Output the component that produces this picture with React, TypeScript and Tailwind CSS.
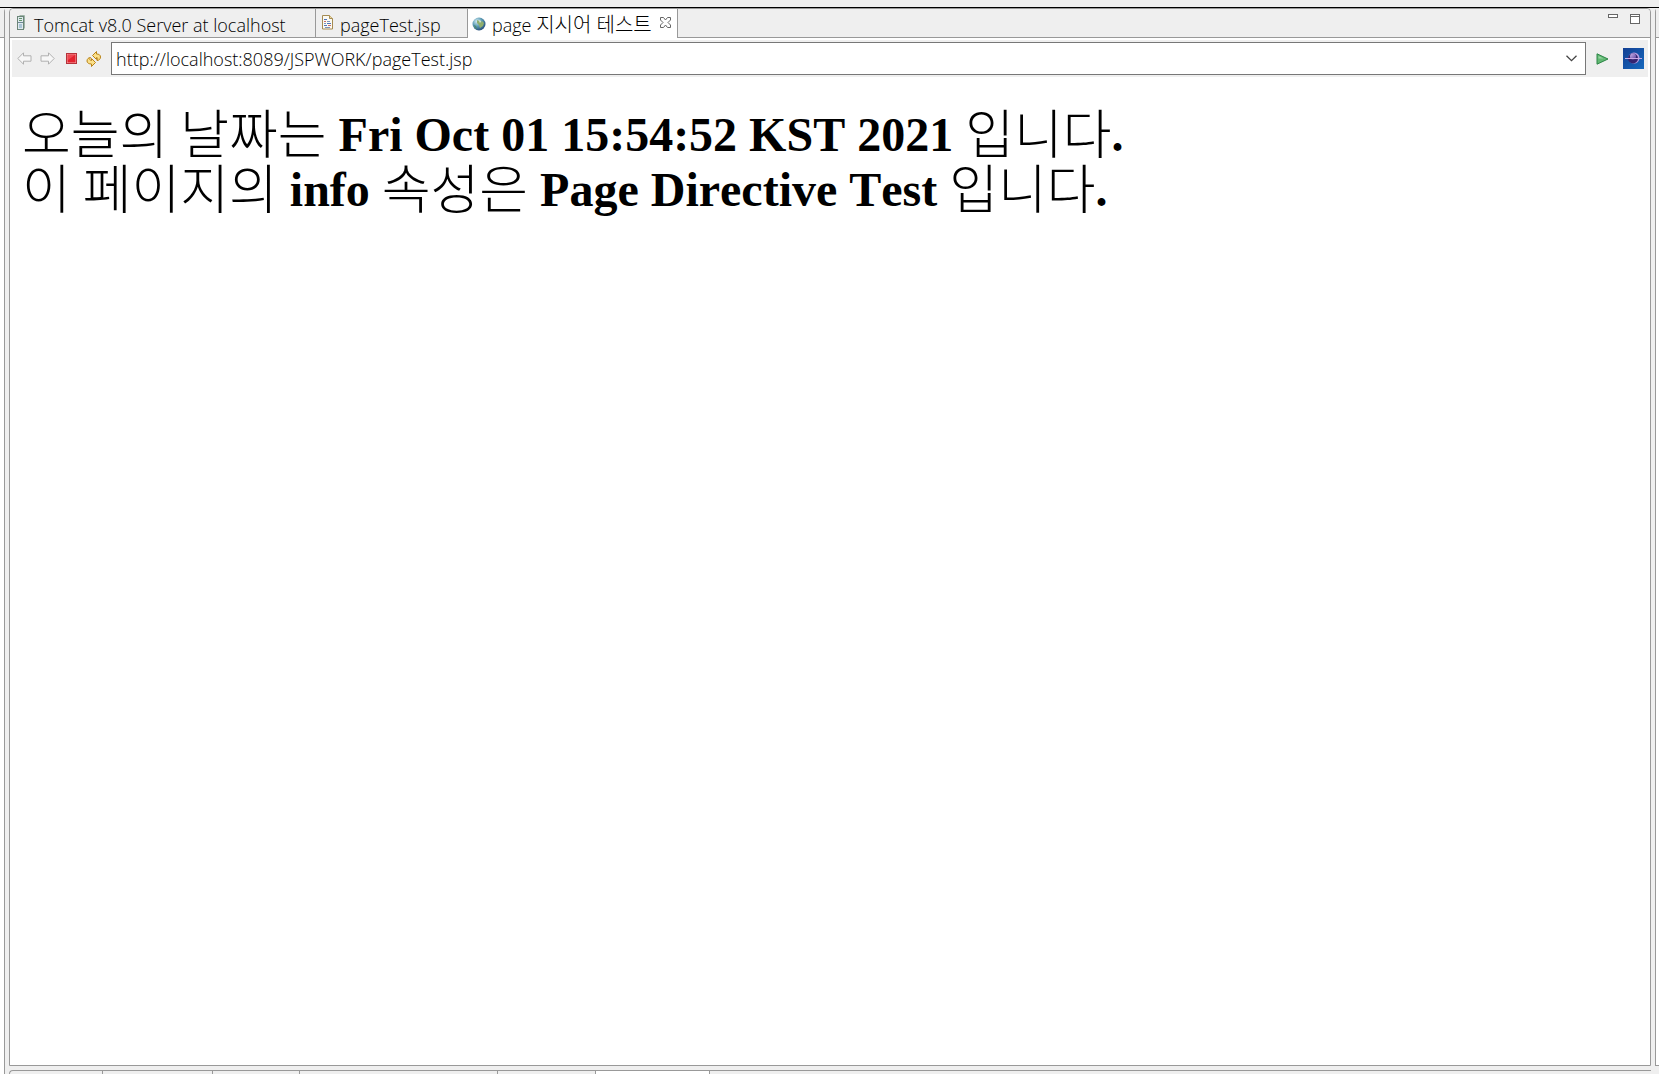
import React from 'react';

function ServerIcon() {
  return (
    <svg width="10" height="16" viewBox="0 0 10 16" aria-hidden="true">
      <path d="M3.500.5h5v13" fill="none" stroke="#9fb3a8" />
      <rect x="1.500" y="1.500" width="6" height="13" fill="#dfe9ee" stroke="#6b8578" />
      <path d="M3 3.500h3M3 5.500h3" stroke="#5f9468" />
      <path d="M2 7.500h5" stroke="#6b8793" />
      <rect x="3" y="9" width="3" height="4" fill="#a9c4d6" />
    </svg>
  );
}

function FileIcon() {
  return (
    <svg width="12" height="15" viewBox="0 0 12 15" aria-hidden="true">
      <path d="M.5.5h7l3 3v10.500H.5z" fill="#fbfaf3" stroke="#a58b52" />
      <path d="M7.500.5v3h3" fill="#ecd9a3" stroke="#a58b52" />
      <path d="M2 4.500h3M5 8.500h4M2 10.500h3" stroke="#4f74b8" />
      <path d="M2 6.500h2M6 10.500h3" stroke="#c96a6a" />
      <path d="M5 6.500h3M3 12.500h5M2 8.500h2" stroke="#7d94bd" />
    </svg>
  );
}

function GlobeIcon() {
  return (
    <svg width="14" height="14" viewBox="0 0 14 14" aria-hidden="true">
      <defs>
        <radialGradient id="globe" cx=".35" cy=".3" r=".75">
          <stop offset="0" stopColor="#d6eef5" />
          <stop offset=".5" stopColor="#5b9bb4" />
          <stop offset="1" stopColor="#234a78" />
        </radialGradient>
      </defs>
      <circle cx="7" cy="7" r="6.500" fill="url(#globe)" />
      <path d="M5 3l2 1 1 2 2-2 2 2-1 3-3 2-1-3-2-2z" fill="#8fae6c" />
      <path d="M7 3l2 1-1 2z" fill="#f1ecc0" />
      <path d="M2 8l2 1 1 3-2-1z" fill="#4b8b70" />
    </svg>
  );
}

function CloseIcon() {
  return (
    <svg width="11" height="11" viewBox="0 0 11 11" fill="#fff" stroke="#666" aria-hidden="true">
      <path d="M.5.5h3l2 2.500 2-2.500h3v2.500L8 5.500l2.500 2.500v2.500h-3l-2-2.500-2 2.500h-3V8L3 5.500.5 3z" />
    </svg>
  );
}

function ArrowIcon({ flip }: { flip?: boolean }) {
  return (
    <svg width="15" height="13" viewBox="0 0 15 13" className={flip ? '-scale-x-100' : ''} aria-hidden="true">
      <path d="M.8 6.500L6.500.8v3h7.500v5.400H6.500v3z" fill="#f7f7f7" stroke="#b0b0b0" strokeLinejoin="round" />
    </svg>
  );
}

function StopIcon() {
  return (
    <svg width="11" height="11" viewBox="0 0 11 11" aria-hidden="true">
      <rect x=".5" y=".5" width="10" height="10" fill="#f6a8a8" stroke="#b5323a" />
      <rect x="1.500" y="1.500" width="8" height="8" fill="#e3222e" />
      <path d="M2 2h7L2 7z" fill="#ee4650" />
    </svg>
  );
}

function RefreshIcon() {
  return (
    <svg width="16" height="16" viewBox="0 0 16 16" fill="#fbe08a" stroke="#b98316" strokeLinejoin="round" aria-hidden="true">
      <path d="M6.500 4.500l4-4v2.500c2.500 0 4 1 4 3s-1.500 3.500-3.500 3.500c1-1.500 1-3-.5-3v2z" />
      <path d="M9.500 11.500l-4 4V13c-2.500 0-4.500-1-4.500-3s1.500-3.500 3.500-3.500c-1 1.500-1 3 1 3v-2z" />
    </svg>
  );
}

function GoIcon() {
  return (
    <svg width="13" height="12" viewBox="0 0 13 12" aria-hidden="true">
      <path d="M1 .8l11 5.200L1 11.200z" fill="#62b873" stroke="#2c8546" strokeLinejoin="round" />
      <path d="M2.500 3l5 2.500h-5z" fill="#98d6a2" />
    </svg>
  );
}

function EclipseIcon() {
  return (
    <svg width="21" height="21" viewBox="0 0 21 21" aria-hidden="true">
      <defs>
        <linearGradient id="sky" x2="1" y2="1">
          <stop offset="0" stopColor="#123f93" />
          <stop offset="1" stopColor="#1769bd" />
        </linearGradient>
        <linearGradient id="ball" x2="1" y2="1">
          <stop offset="0" stopColor="#c9b4ec" />
          <stop offset="1" stopColor="#5a3f9c" />
        </linearGradient>
      </defs>
      <path d="M0 0h21v21H0z" fill="url(#sky)" />
      <circle cx="11" cy="10" r="5.500" fill="#b79be0" />
      <circle cx="10" cy="10.500" r="5" fill="#35246f" />
      <circle cx="10" cy="8.500" r="3" fill="url(#ball)" />
      <path d="M2 10.500h17" stroke="#c9a8e6" />
    </svg>
  );
}

function Hangul({ children }: { children: React.ReactNode }) {
  return (
    <span className="align-[-3px] font-['Noto_Sans_CJK_KR',sans-serif] text-[53px] leading-[40px] font-light">
      {children}
    </span>
  );
}

export default function App() {
  return (
    <div className="flex h-screen flex-col overflow-hidden bg-[#efefef] font-['Open_Sans','Noto_Sans_CJK_KR',sans-serif] text-[18px] font-light text-black">
      <div className="h-2 shrink-0 border-b border-black" />
      <div className="flex min-h-0 flex-1 gap-1">
        <aside className="flex w-[5px] shrink-0 flex-col rounded-tr border-r border-[#999] bg-white">
          <div className="h-[30px] border-b border-[#999] bg-[#efefef]" />
        </aside>

        <div className="flex min-w-0 flex-1 flex-col">
          <section className="flex min-h-0 flex-1 flex-col rounded-t border border-[#999] bg-white">
            <header className="flex h-[29px] shrink-0 rounded-t bg-[#efefef]">
              <div role="tablist" className="flex">
                <button role="tab" aria-selected="false" className="flex w-[306px] items-start gap-2 border-r border-b border-[#999] pl-1.5 leading-[32px] whitespace-nowrap">
                  <span className="mt-1.5"><ServerIcon /></span>
                  Tomcat v8.0 Server at localhost
                </button>
                <button role="tab" aria-selected="false" className="flex w-[152px] items-start gap-1.5 border-r border-b border-[#999] pl-1.5 leading-[32px] whitespace-nowrap">
                  <span className="mt-1.5"><FileIcon /></span>
                  pageTest.jsp
                </button>
                <div className="flex w-[210px] items-start border-r border-[#999] bg-white pl-1">
                  <button role="tab" aria-selected="true" className="flex items-start gap-1.5 leading-[32px] whitespace-nowrap">
                    <span className="mt-2"><GlobeIcon /></span>
                    <span>page <span className="text-[20px] leading-none">지시어 테스트</span></span>
                  </button>
                  <button aria-label="Close" className="mt-2 ml-2"><CloseIcon /></button>
                </div>
              </div>
              <div className="flex flex-1 items-start justify-end gap-3 border-b border-[#999] pt-[5px] pr-2.5">
                <button aria-label="Minimize" className="h-1 w-2.5 border border-[#666] bg-white" />
                <button aria-label="Maximize" className="flex h-2.5 w-2.5 items-start border border-[#666] bg-white">
                  <span className="h-0.5 flex-1 border-b border-[#666]" />
                </button>
              </div>
            </header>

            <form className="mx-0.5 mt-0.5 flex h-[37px] shrink-0 items-center bg-[#efefef] pr-1" onSubmit={(e) => e.preventDefault()}>
              <div className="flex w-[99px] shrink-0 items-center pl-[5px]">
                <button type="button" aria-label="Back" className="mr-2"><ArrowIcon /></button>
                <button type="button" aria-label="Forward" className="mr-[11px]"><ArrowIcon flip /></button>
                <button type="button" aria-label="Stop" className="mr-[9px]"><StopIcon /></button>
                <button type="button" aria-label="Refresh"><RefreshIcon /></button>
              </div>
              <div className="flex h-[33px] min-w-0 flex-1 items-center border border-[#777] bg-white pr-2">
                <input
                  aria-label="Address"
                  defaultValue="http://localhost:8089/JSPWORK/pageTest.jsp"
                  className="min-w-0 flex-1 bg-transparent pt-0.5 pl-1 outline-none"
                />
                <button type="button" aria-label="Show history">
                  <svg width="11" height="7" viewBox="0 0 11 7" fill="none" stroke="#444" strokeWidth="1.300" aria-hidden="true">
                    <path d="M.5.7l5 5 5-5" />
                  </svg>
                </button>
              </div>
              <button aria-label="Go" className="ml-2.5"><GoIcon /></button>
              <button type="button" aria-label="Eclipse" className="ml-3.5"><EclipseIcon /></button>
            </form>

            <main className="min-h-0 flex-1 px-3 pt-[30px] font-['Liberation_Serif',serif] text-[48px] leading-[55px] font-bold text-black [font-kerning:none]">
              <p>
                <Hangul>오늘의</Hangul> <Hangul>날짜는</Hangul> Fri Oct 01 15:54:52 KST 2021 <Hangul>입니다</Hangul>.
              </p>
              <p>
                <Hangul>이</Hangul> <Hangul>페이지의</Hangul> info <Hangul>속성은</Hangul> Page Directive Test <Hangul>입니다</Hangul>.
              </p>
            </main>
          </section>

          <footer className="mt-1 flex h-1 shrink-0 rounded-tl border-t border-l border-[#999]">
            <div className="w-[93px] border-r border-[#999]" />
            <div className="w-[110px] border-r border-[#999]" />
            <div className="w-[87px] border-r border-[#999]" />
            <div className="w-[198px] border-r border-[#999]" />
            <div className="w-[98px] border-r border-[#999]" />
            <div className="w-[114px] border-r border-[#999] bg-white" />
          </footer>
        </div>

        <aside className="mb-2 flex w-1 shrink-0 flex-col rounded-tl border-b border-l border-[#999] bg-white">
          <div className="h-[30px] border-b border-[#999] bg-[#efefef]" />
        </aside>
      </div>
    </div>
  );
}
